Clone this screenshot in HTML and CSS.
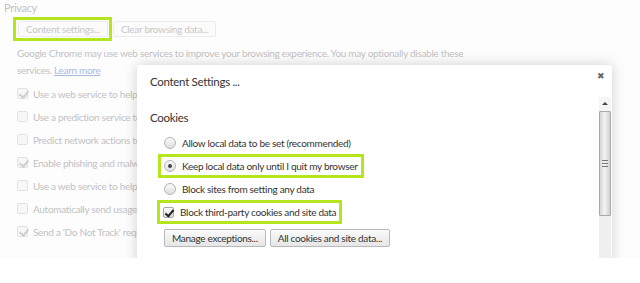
FILE: index.html
```html
<!DOCTYPE html>
<html lang="en">

<head>
    <meta charset="UTF-8">
    <title>Content Settings</title>
    <link rel="stylesheet" href="styles.css">
</head>

<body>
    <div class="page">
        <div class="settings">
            <h2>Privacy</h2>
            <div class="button-row">
                <span class="highlight"><button class="faded-btn">Content settings...</button></span>
                <button class="faded-btn">Clear browsing data...</button>
            </div>
            <p class="intro">Google Chrome may use web services to improve your browsing experience. You may optionally disable these services. <a href="#">Learn more</a></p>
            <ul class="options">
                <li><span class="box checked"></span>Use a web service to help resolve navigation errors</li>
                <li><span class="box"></span>Use a prediction service to help complete searches</li>
                <li><span class="box"></span>Predict network actions to improve page load performance</li>
                <li><span class="box checked"></span>Enable phishing and malware protection</li>
                <li><span class="box"></span>Use a web service to help resolve spelling errors</li>
                <li><span class="box"></span>Automatically send usage statistics and crash reports</li>
                <li><span class="box checked"></span>Send a 'Do Not Track' request with your browsing traffic</li>
            </ul>
        </div>

        <div class="dialog">
            <div class="dialog-head">
                <span class="dialog-title">Content Settings ...</span>
                <span class="close">&#x2716;</span>
            </div>
            <div class="dialog-body">
                <div class="dialog-content">
                    <h3>Cookies</h3>
                    <div class="choice"><span class="radio"></span>Allow local data to be set (recommended)</div>
                    <div class="choice marked"><span class="radio on"></span>Keep local data only until I quit my browser</div>
                    <div class="choice"><span class="radio"></span>Block sites from setting any data</div>
                    <div class="choice marked tick"><span class="check"></span>Block third-party cookies and site data</div>
                    <div class="actions">
                        <button class="btn">Manage exceptions...</button>
                        <button class="btn">All cookies and site data...</button>
                    </div>
                </div>
                <div class="scrollbar">
                    <div class="arrow"></div>
                    <div class="thumb"><span class="grip"></span></div>
                </div>
            </div>
        </div>
    </div>
</body>

</html>
```

FILE: styles.css
```css
* {
    box-sizing: border-box;
}

body {
    margin: 0;
    background-color: white;
    font-family: Lato, "Open Sans", sans-serif;
    font-size: 10px;
    letter-spacing: -0.3px;
}

.page {
    position: relative;
    height: 258px;
    overflow: hidden;
    background-color: #fdfdfd;
}

.settings {
    padding: 0 0 0 4px;
    color: #c2c2c2;
}

h2 {
    margin: 0;
    font-size: 11px;
    font-weight: normal;
    line-height: 16px;
}

.button-row {
    display: flex;
    align-items: center;
    gap: 1px;
    margin: 1px 0 0 9px;
}

.highlight {
    display: inline-block;
    padding: 1px 1px 1px 2px;
    border: 3px solid #b5e61d;
}

.faded-btn {
    font-family: inherit;
    font-size: 10px;
    letter-spacing: -0.3px;
    color: #c8c8c8;
    background-color: #fbfbfb;
    border: 1px solid #ececec;
    border-radius: 2px;
    height: 16px;
    padding: 0 7px;
    line-height: 14px;
}

.intro {
    margin: 4px 0 0 13px;
    width: 456px;
    line-height: 17px;
}

.intro a {
    color: #a9b9e2;
}

.options {
    list-style: none;
    margin: 3px 0 0 13px;
    padding: 0;
}

.options li {
    display: flex;
    align-items: center;
    height: 23px;
    white-space: nowrap;
}

.box {
    width: 11px;
    height: 11px;
    border: 1px solid #e2e2e2;
    border-radius: 2px;
    background-color: #f7f7f7;
    margin-right: 5px;
    position: relative;
}

.box.checked::after {
    content: "";
    position: absolute;
    left: 3px;
    top: 0;
    width: 4px;
    height: 7px;
    border: solid #cfcfcf;
    border-width: 0 2px 2px 0;
    transform: rotate(40deg);
}

.dialog {
    position: absolute;
    left: 137px;
    top: 65px;
    width: 475px;
    height: 200px;
    background-color: white;
    border-radius: 3px 3px 0 0;
    box-shadow: 0 0 14px rgba(0, 0, 0, 0.18);
    color: #333;
}

.dialog-head {
    display: flex;
    justify-content: space-between;
    height: 32px;
    padding: 9px 7px 0 13px;
}

.dialog-title {
    font-size: 11.5px;
    line-height: 16px;
}

.close {
    font-size: 9px;
    color: #666;
    line-height: 9px;
    margin-top: -3px;
}

.dialog-body {
    display: flex;
}

.dialog-content {
    flex: 1;
    padding: 12px 0 0 13px;
}

h3 {
    margin: 0 0 7px;
    font-size: 11.5px;
    font-weight: normal;
    line-height: 18px;
}

.choice {
    display: flex;
    align-items: center;
    width: fit-content;
    height: 18px;
    padding: 0 3px;
    margin: 0 0 5px 11px;
    white-space: nowrap;
}

.choice.marked {
    outline: 3px solid #b5e61d;
}

.choice.tick {
    margin-top: 3px;
    margin-left: 10px;
}

.radio {
    width: 12px;
    height: 12px;
    border: 1px solid #b5b5b5;
    border-radius: 50%;
    background: linear-gradient(#fafafa, #dedede);
    margin-right: 6px;
    position: relative;
}

.radio.on::after {
    content: "";
    position: absolute;
    left: 3px;
    top: 3px;
    width: 4px;
    height: 4px;
    border-radius: 50%;
    background-color: #444;
}

.check {
    width: 11px;
    height: 11px;
    border: 1px solid #a8a8a8;
    border-radius: 2px;
    background: linear-gradient(#fafafa, #dcdcdc);
    margin-right: 6px;
    position: relative;
}

.check::after {
    content: "";
    position: absolute;
    left: 3px;
    top: 0;
    width: 3px;
    height: 7px;
    border: solid #222;
    border-width: 0 2px 2px 0;
    transform: rotate(40deg);
}

.actions {
    display: flex;
    gap: 4px;
    margin: 8px 0 0 14px;
}

.btn {
    font-family: inherit;
    font-size: 10px;
    letter-spacing: -0.3px;
    color: #333;
    height: 18px;
    padding: 0 7px;
    line-height: 15px;
    border: 1px solid #b9b9b9;
    border-radius: 2px;
    background: linear-gradient(#fafafa, #e6e6e6);
}

.scrollbar {
    width: 12px;
    height: 170px;
    margin-right: 1px;
    background-color: #efefef;
}

.arrow {
    position: relative;
    height: 14px;
    background-color: #f5f5f5;
}

.arrow::after {
    content: "";
    position: absolute;
    left: 3px;
    top: 5px;
    border-left: 3px solid transparent;
    border-right: 3px solid transparent;
    border-bottom: 3px solid #444;
}

.thumb {
    display: flex;
    align-items: center;
    justify-content: center;
    height: 105px;
    border: 1px solid #a9a9a9;
    border-radius: 1px;
    background: linear-gradient(to right, #d6d6d6, #f3f3f3 45%, #d0d0d0);
}

.grip {
    width: 6px;
    height: 7px;
    border-top: 1px solid #777;
    border-bottom: 1px solid #777;
    background: linear-gradient(transparent 2px, #777 2px, #777 3px, transparent 3px);
}
```
